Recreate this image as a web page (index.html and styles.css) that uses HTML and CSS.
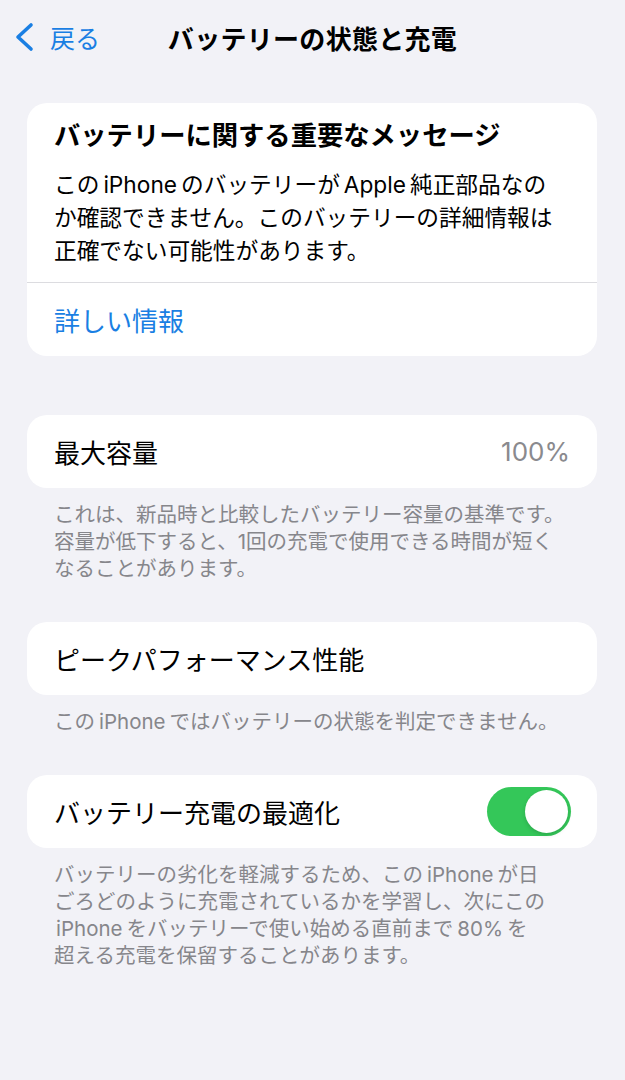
FILE: index.html
```html
<!DOCTYPE html>
<html lang="ja">
    <head>
        <meta charset="utf-8" />
        <link rel="stylesheet" href="styles.css">
    </head>

    <body>
        <div class="nav">
            <a class="back">
                <svg class="chevron" width="24" height="30" viewBox="0 0 24 30">
                    <path d="M19 3 L6 15 L19 27" fill="none" stroke="#1a7fe3" stroke-width="3.6" stroke-linecap="round" stroke-linejoin="round" />
                </svg>
                <span>戻る</span>
            </a>
            <div class="title">バッテリーの状態と充電</div>
            <div></div>
        </div>

        <div class="card notice">
            <div class="notice-body">
                <div class="notice-title">バッテリーに関する重要なメッセージ</div>
                <div class="notice-text">この<span class="lat">iPhone</span>のバッテリーが<span class="lat">Apple</span>純正部品なの<br>か確認できません。このバッテリーの詳細情報は<br>正確でない可能性があります。</div>
            </div>
            <div class="row link">詳しい情報</div>
        </div>

        <div class="card first-section">
            <div class="row">
                <span>最大容量</span>
                <span class="value">100%</span>
            </div>
        </div>
        <p class="footnote">これは、新品時と比較したバッテリー容量の基準です。<br>容量が低下すると、1回の充電で使用できる時間が短く<br>なることがあります。</p>

        <div class="card">
            <div class="row">
                <span>ピークパフォーマンス性能</span>
            </div>
        </div>
        <p class="footnote">この<span class="lat">iPhone</span>ではバッテリーの状態を判定できません。</p>

        <div class="card">
            <div class="row">
                <span>バッテリー充電の最適化</span>
                <span class="switch on"><span class="knob"></span></span>
            </div>
        </div>
        <p class="footnote">バッテリーの劣化を軽減するため、この<span class="lat">iPhone</span>が日<br>ごろどのように充電されているかを学習し、次にこの<br><span class="lat first">iPhone</span>をバッテリーで使い始める直前まで<span class="lat">80%</span>を<br>超える充電を保留することがあります。</p>
    </body>
</html>
```

FILE: styles.css
```css
body {
    margin: 0;
    padding: 0 28px 0 27px;
    background: #f2f2f7;
    font-family: "Inter", "Noto Sans CJK JP", sans-serif;
    color: #000;
}

.nav {
    display: grid;
    grid-template-columns: 1fr auto 1fr;
    align-items: center;
    height: 74px;
    margin: 0 -28px 0 -27px;
}

.back {
    display: flex;
    align-items: center;
    gap: 14px;
    padding-left: 12px;
    color: #1a7fe3;
    font-size: 25px;
}

.chevron {
    display: block;
}

.title {
    font-size: 26px;
    font-weight: 700;
    letter-spacing: 0.3px;
}

.card {
    background: #fff;
    border-radius: 20px;
    margin-top: 40px;
}

.notice {
    margin-top: 29px;
}

.first-section {
    margin-top: 59px;
}

.notice-body {
    padding: 16px 27px 15px;
    border-bottom: 1px solid #dcdce0;
}

.notice-title {
    font-size: 26.3px;
    font-weight: 700;
    line-height: 34px;
    margin-bottom: 15px;
}

.notice-text {
    font-size: 22.7px;
    line-height: 33px;
    white-space: nowrap;
}

.lat {
    margin: 0 4px;
}

.lat.first {
    margin-left: 2px;
}

.row {
    display: flex;
    align-items: center;
    justify-content: space-between;
    height: 73px;
    padding: 0 27px;
    font-size: 26px;
}

.link {
    color: #1a7fe3;
}

.value {
    color: #8a8a8e;
}

.footnote {
    margin: 13px 0 0;
    padding: 0 27px;
    font-size: 20.5px;
    line-height: 27px;
    color: #86868b;
    white-space: nowrap;
}

.switch {
    display: block;
    width: 84px;
    height: 49px;
    border-radius: 25px;
    background: #e5e5ea;
    position: relative;
    margin-right: -1px;
}

.switch.on {
    background: #34c759;
}

.knob {
    position: absolute;
    top: 3px;
    right: 3px;
    width: 43px;
    height: 43px;
    border-radius: 50%;
    background: #fff;
    box-shadow: 0 2px 4px rgba(0, 0, 0, 0.15);
}
```
